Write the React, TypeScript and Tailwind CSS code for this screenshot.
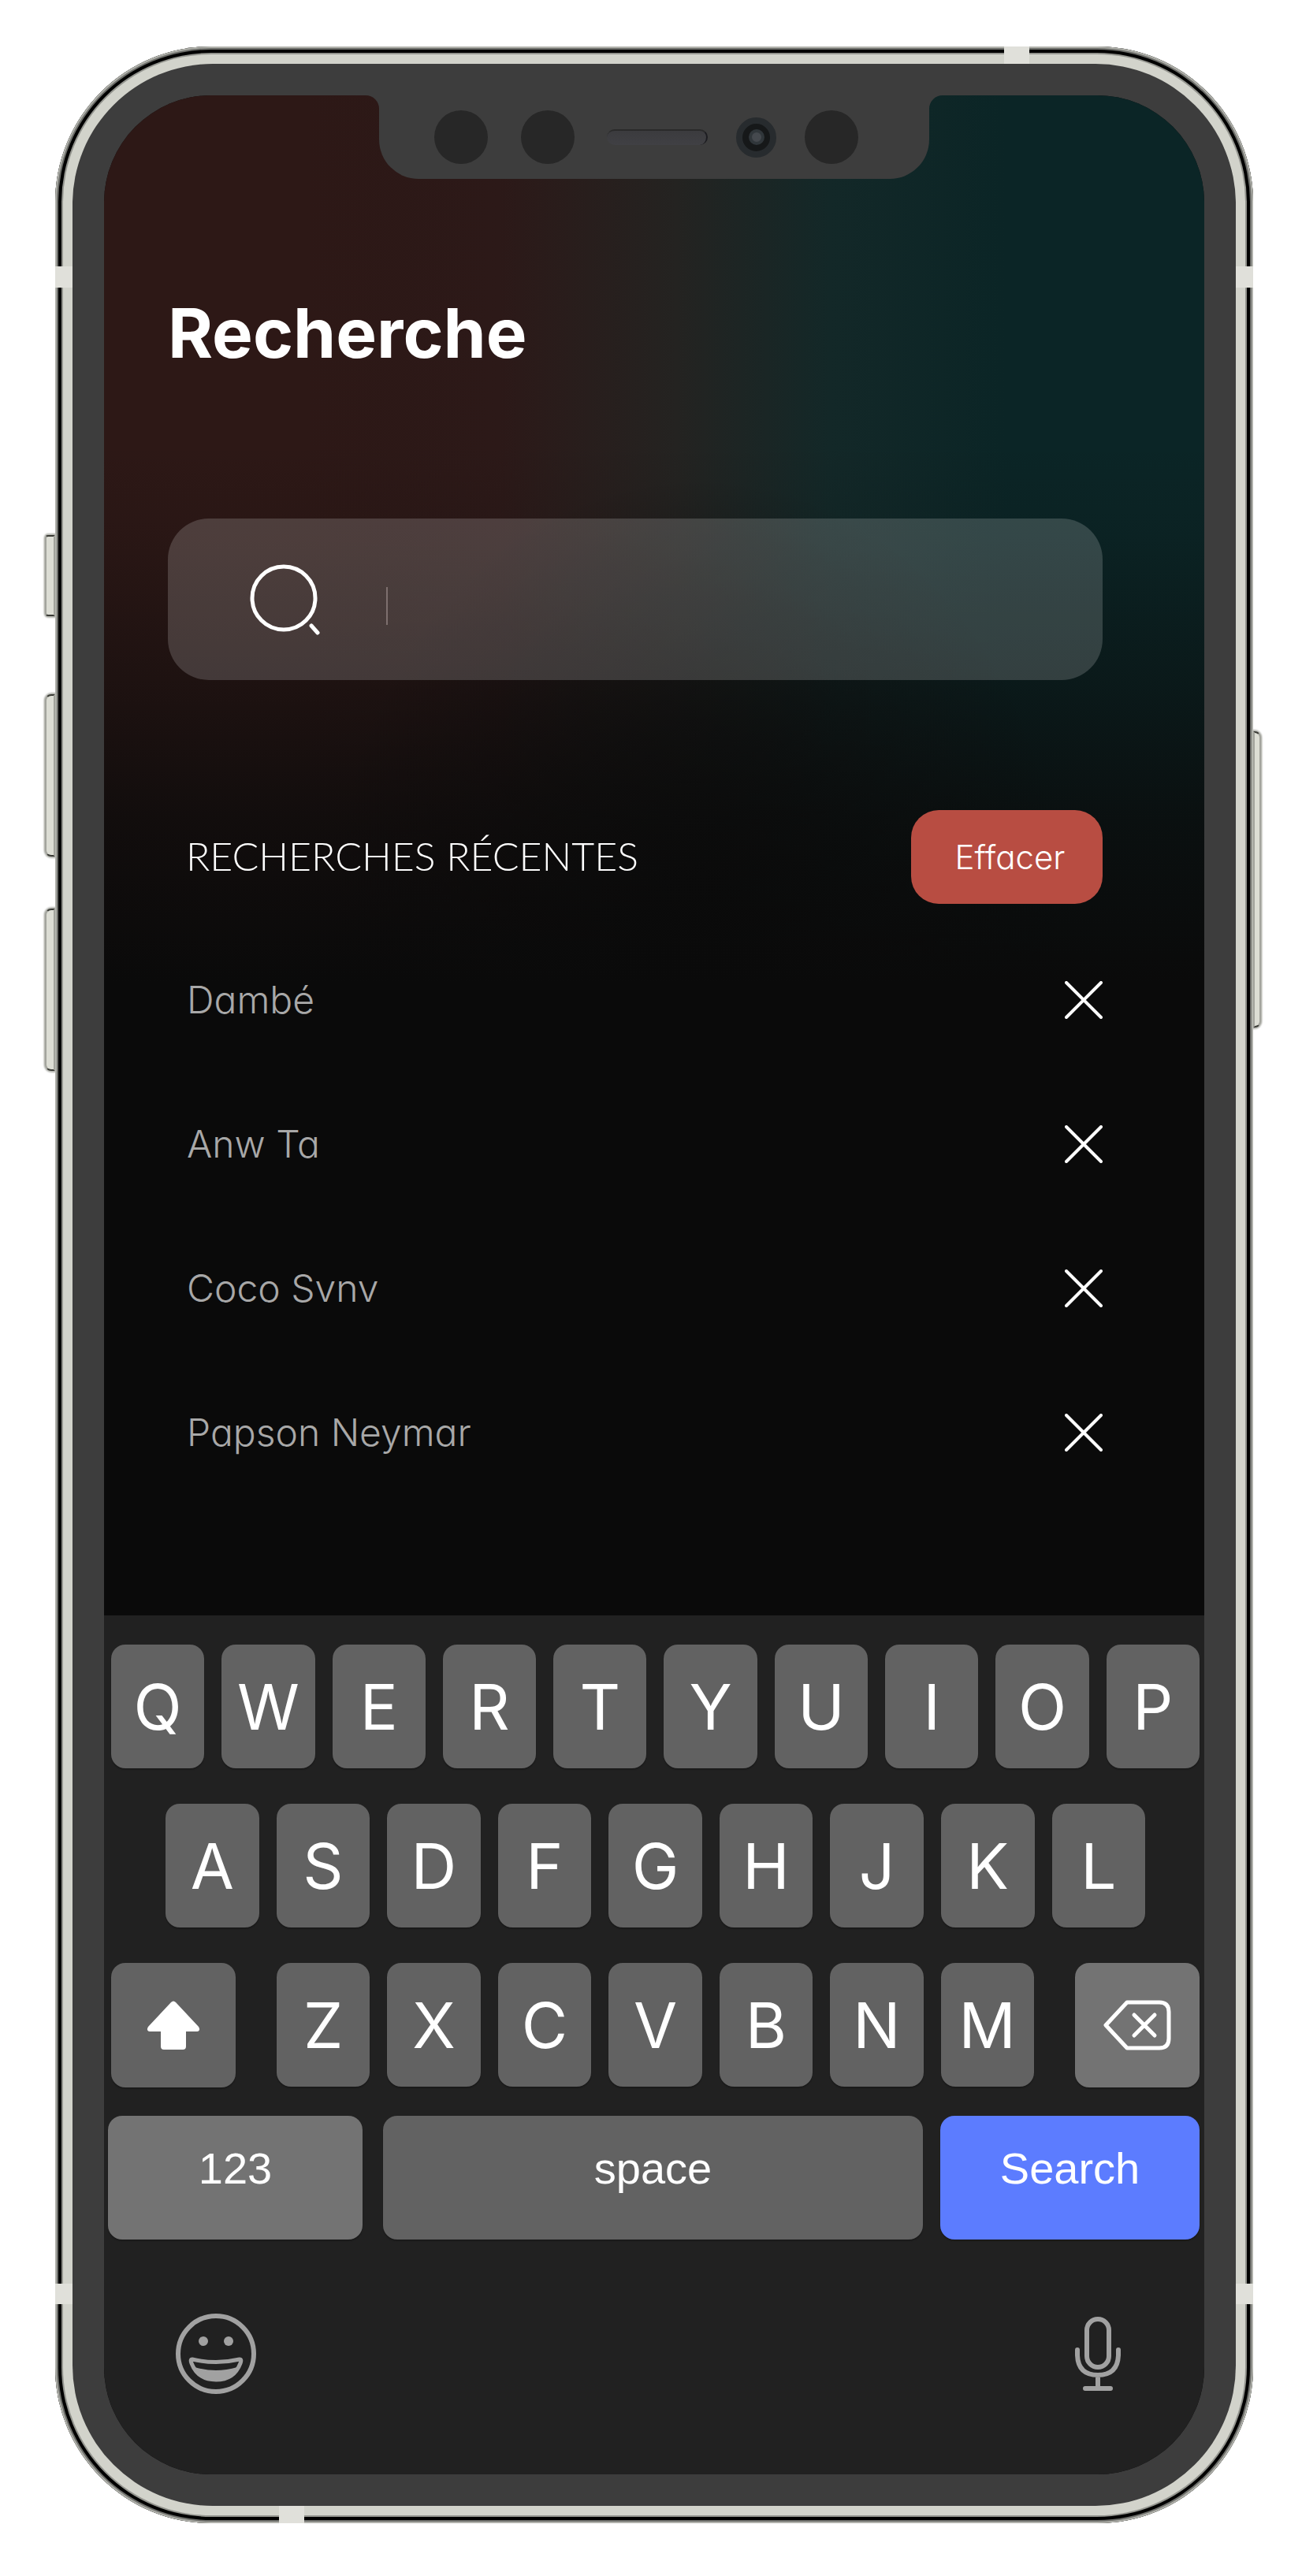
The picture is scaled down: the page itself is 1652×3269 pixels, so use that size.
import React from "react";

const TOP = ["Q", "W", "E", "R", "T", "Y", "U", "I", "O", "P"];
const MIDDLE = ["A", "S", "D", "F", "G", "H", "J", "K", "L"];
const BOTTOM = ["Z", "X", "C", "V", "B", "N", "M"];
const RECENT = ["Dambé", "Anw Ta", "Coco Svnv", "Papson Neymar"];

const band = "absolute bg-[#e0e0da]";
const sideButton =
  "absolute border-2 border-x-[#a3a49d] border-y-[#3a3b36] bg-[#dcddd4] shadow-[0_-1px_2px_1px_#b5b6b0,0_1px_2px_1px_#b5b6b0]";

function Key({ label }: { label: string }) {
  return (
    <button
      type="button"
      className="flex h-[157px] min-w-0 flex-1 items-center justify-center rounded-[18px] bg-[#626262] text-[80px] leading-none shadow-[0_2px_1px_#1a1a1a]"
    >
      {label}
    </button>
  );
}

function Notch() {
  return (
    <div className="absolute inset-x-0 top-0 flex justify-center">
      <svg viewBox="0 0 17 17" className="h-[17px] w-[17px]" aria-hidden="true">
        <path d="M0 0H17V17A17 17 0 0 0 0 0Z" fill="#3d3d3d" />
      </svg>
      <div className="flex h-[106px] w-1/2 items-center rounded-b-[50px] bg-[#3d3d3d] pl-[70px]">
        <span className="h-[68px] w-[68px] rounded-full bg-[#272727]" />
        <span className="ml-[42px] h-[68px] w-[68px] rounded-full bg-[#272727]" />
        <span className="ml-[41px] h-5 w-[128px] rounded-full border-t-2 border-r-2 border-t-[#2a2a2a] border-r-[#1c1c20] bg-linear-to-b from-[#3b3b3e] to-[#404044]" />
        <span className="ml-9 flex h-[51px] w-[51px] items-center justify-center rounded-full border-8 border-[#272b2e] bg-[#161819]">
          <span className="h-5 w-5 rounded-full border-4 border-[#30363a] bg-[#45494e]" />
        </span>
        <span className="ml-9 h-[68px] w-[68px] rounded-full bg-[#272727]" />
      </div>
      <svg viewBox="0 0 17 17" className="h-[17px] w-[17px]" aria-hidden="true">
        <path d="M17 0H0V17A17 17 0 0 1 17 0Z" fill="#3d3d3d" />
      </svg>
    </div>
  );
}

function Keyboard() {
  return (
    <section
      aria-label="Clavier"
      className="relative bg-[#212121] pt-[37px] pr-[6px] pb-[102px] font-['Inter',sans-serif] text-white"
    >
      <div className="flex flex-col gap-[45px] pl-[9px]">
        <div className="flex gap-[22px]">
          {TOP.map((k) => (
            <Key key={k} label={k} />
          ))}
        </div>
        <div className="flex gap-[22px] px-[69px]">
          {MIDDLE.map((k) => (
            <Key key={k} label={k} />
          ))}
        </div>
        <div className="flex gap-[52px]">
          <button
            type="button"
            aria-label="Majuscule"
            className="flex h-[158px] w-[158px] items-center justify-center rounded-[18px] bg-[#626262] shadow-[0_2px_1px_#1a1a1a]"
          >
            <svg viewBox="0 0 68 62" className="h-[62px] w-[68px]" fill="#fff">
              <path d="M31 2Q34 -1 37 2L66 33Q69 38 64 39H50V58Q50 62 46 62H22Q18 62 18 58V39H4Q-1 38 2 33Z" />
            </svg>
          </button>
          <div className="flex min-w-0 flex-1 gap-[22px]">
            {BOTTOM.map((k) => (
              <Key key={k} label={k} />
            ))}
          </div>
          <button
            type="button"
            aria-label="Supprimer"
            className="flex h-[158px] w-[158px] items-center justify-center rounded-[18px] bg-[#737373] shadow-[0_2px_1px_#1a1a1a]"
          >
            <svg
              viewBox="0 0 86 64"
              className="h-16 w-[86px]"
              fill="none"
              stroke="#fff"
              strokeWidth="5"
              strokeLinecap="round"
              strokeLinejoin="round"
            >
              <path d="M30 3H71Q83 3 83 15V49Q83 61 71 61H30L3 32Z" />
              <path d="M39 19L65 45M65 19L39 45" />
            </svg>
          </button>
        </div>
      </div>
      <div className="mt-9 flex pl-[5px] font-['Liberation_Sans',Arial,sans-serif] text-[56px] leading-none">
        <button
          type="button"
          className="flex h-[157px] w-[323px] items-center justify-center rounded-[18px] bg-[#737373] pb-6 shadow-[0_2px_1px_#1a1a1a]"
        >
          123
        </button>
        <button
          type="button"
          className="ml-[26px] flex h-[157px] flex-1 items-center justify-center rounded-[18px] bg-[#626262] pb-6 shadow-[0_2px_1px_#1a1a1a]"
        >
          space
        </button>
        <button
          type="button"
          className="ml-[22px] flex h-[157px] w-[329px] items-center justify-center rounded-[18px] bg-[#5c7cff] pb-6 shadow-[0_2px_1px_#1a1a1a]"
        >
          Search
        </button>
      </div>
      <div className="mt-[94px] flex items-center justify-between pr-[100px] pl-[91px]">
        <button type="button" aria-label="Emoji">
          <svg viewBox="0 0 102 102" className="h-[102px] w-[102px]" fill="none">
            <circle cx="51" cy="51" r="48" stroke="#a1a1a1" strokeWidth="6" />
            <circle cx="35" cy="35" r="6" fill="#a1a1a1" />
            <circle cx="67" cy="35" r="6" fill="#a1a1a1" />
            <path
              d="M21 58Q51 65 81 58Q84 58 82 63Q74 84 51 84Q28 84 20 63Q18 58 21 58Z"
              stroke="#a1a1a1"
              strokeWidth="5"
              strokeLinejoin="round"
            />
            <path d="M24 68Q51 76 78 68Q70 85 51 85Q32 85 24 68Z" fill="#a1a1a1" />
          </svg>
        </button>
        <button type="button" aria-label="Dictée">
          <svg
            viewBox="0 0 58 94"
            className="h-[94px] w-[58px]"
            fill="none"
            stroke="#a1a1a1"
            strokeWidth="6"
            strokeLinecap="round"
          >
            <rect x="15" y="3" width="28" height="61" rx="14" />
            <path d="M3 42V49Q4 74 29 74Q54 74 55 49V42M29 74V91M13 91H45" />
          </svg>
        </button>
      </div>
    </section>
  );
}

export default function App() {
  return (
    <main className="min-h-screen bg-white pt-[59px] pr-[62px] pb-[67px] pl-[70px]">
      <div className="relative rounded-[198px] bg-[#d2d3cb] p-[22px] shadow-[inset_0_0_0_2px_#b0b1ab,inset_0_0_0_4px_#6d6e6a,inset_0_0_0_8px_#000,inset_0_0_0_10px_#93948e]">
        <div className={`${sideButton} top-[620px] -left-[13px] h-[103px] w-[13px] rounded-l-[4px]`} />
        <div className={`${sideButton} top-[822px] -left-[13px] h-[206px] w-[13px] rounded-l-[8px]`} />
        <div className={`${sideButton} top-[1094px] -left-[13px] h-[206px] w-[13px] rounded-l-[8px]`} />
        <div className={`${sideButton} top-[869px] -right-[10px] h-[376px] w-[10px] rounded-r-[8px]`} />
        <div className={`${band} top-[279px] left-0 h-[27px] w-[22px]`} />
        <div className={`${band} top-[279px] right-0 h-[27px] w-[22px]`} />
        <div className={`${band} bottom-[278px] left-0 h-[26px] w-[22px]`} />
        <div className={`${band} right-0 bottom-[278px] h-[26px] w-[22px]`} />
        <div className={`${band} top-0 right-[284px] h-[22px] w-8`} />
        <div className={`${band} bottom-0 left-[284px] h-[22px] w-8`} />

        <div className="relative rounded-[178px] bg-[#3d3d3d] p-10">
          <div className="relative overflow-hidden rounded-[136px] bg-[#0a0a0a]">
            <div className="absolute inset-x-0 top-0 h-[1150px] bg-[linear-gradient(90deg,#2d1816_18%,#2c1918_36%,#242321_52%,#132828_66%,#0b2526_82%)]">
              <div className="h-full bg-[radial-gradient(ellipse_34%_50%_at_54%_92%,#0a0a0ad0_0%,#0a0a0a80_45%,#0a0a0a00_100%),linear-gradient(180deg,#0a0a0a00_38%,#0a0a0a18_48%,#0a0a0a70_65%,#0a0a0ac8_80%,#0a0a0a_98%)]" />
            </div>
            <Notch />

            <div className="relative px-[81px] pt-[257px] font-['Inter',sans-serif]">
              <h1 className="text-[87px] leading-[90px] font-bold text-white">
                Recherche
              </h1>

              <label className="mt-[190px] mr-[48px] flex h-[205px] items-center rounded-[52px] bg-white/17 pl-[104px]">
                <svg
                  viewBox="0 0 90 90"
                  className="h-[90px] w-[90px]"
                  fill="none"
                  stroke="#fff"
                  strokeWidth="5"
                  strokeLinecap="round"
                >
                  <circle cx="43" cy="43" r="40" />
                  <path d="M78 78L86 87" />
                </svg>
                <span className="mt-4 ml-[83px] h-12 w-[2px] bg-[#7d6f6e]" />
                <input
                  type="text"
                  aria-label="Recherche"
                  className="min-w-0 flex-1 bg-transparent px-4 text-[48px] text-white outline-none"
                />
              </label>

              <div className="mt-[165px] mr-[48px] flex items-center justify-between pl-[23px]">
                <h2 className="pb-1 font-['Lato',sans-serif] text-[50px] leading-none font-light text-white">
                  RECHERCHES RÉCENTES
                </h2>
                <button
                  type="button"
                  className="h-[119px] w-[243px] rounded-[35px] bg-[#b84d42] pl-2 text-[42px] font-light text-white [font-feature-settings:'cv11']"
                >
                  Effacer
                </button>
              </div>

              <ul className="mt-[30px] mr-[48px] pb-[141px] pl-6 text-[48px] font-light text-[#a8a8a8] [font-feature-settings:'cv11']">
                {RECENT.map((name) => (
                  <li key={name} className="flex h-[183px] items-center justify-between">
                    <span>{name}</span>
                    <button type="button" aria-label={`Supprimer ${name}`}>
                      <svg
                        viewBox="0 0 48 48"
                        className="h-12 w-12"
                        stroke="#fff"
                        strokeWidth="4"
                        strokeLinecap="round"
                      >
                        <path d="M2 2L46 46M46 2L2 46" />
                      </svg>
                    </button>
                  </li>
                ))}
              </ul>
            </div>

            <Keyboard />
          </div>
        </div>
      </div>
    </main>
  );
}
